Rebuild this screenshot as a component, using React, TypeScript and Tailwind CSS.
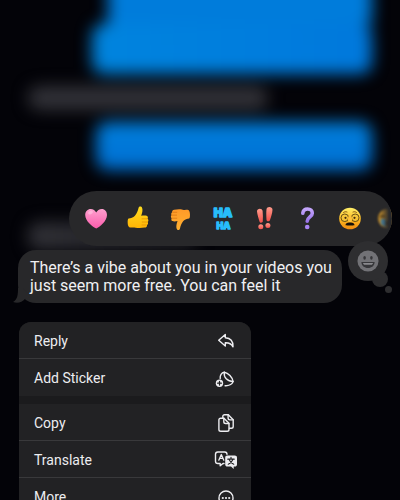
import type { ReactNode } from "react";

type Item = { label: string; icon: ReactNode };

function HeartIcon() {
  return (
    <svg viewBox="0 0 24 24" className="size-6" aria-hidden="true">
      <defs>
        <linearGradient id="heart" x1="0" y1="0" x2="0" y2="1">
          <stop offset="0" stopColor="#ff9fce" />
          <stop offset="1" stopColor="#f95cab" />
        </linearGradient>
      </defs>
      <path
        d="M12.300 22.600C9 20.600 1.200 15.400 1.200 8.900 1.200 5.500 3.700 3 6.700 3c2.500 0 4.600 1.500 5.500 3.600C13.200 4.500 15.300 3 17.800 3c3 0 5.200 2.500 5.200 5.900 0 6.500-7.500 11.700-10.700 13.700z"
        fill="url(#heart)"
      />
      <ellipse cx="6.500" cy="6.500" rx="2.600" ry="1.700" fill="#ffc4e2" opacity=".6" transform="rotate(-30 6.500 6.500)" />
    </svg>
  );
}

function ThumbShape({ from, to, line, id }: { from: string; to: string; line: string; id: string }) {
  return (
    <>
      <defs>
        <linearGradient id={id} x1="0" y1="0" x2="0" y2="1">
          <stop offset="0" stopColor={from} />
          <stop offset="1" stopColor={to} />
        </linearGradient>
      </defs>
      <path
        d="M2.600 12.600C4.800 12.200 7.200 11.800 8.900 9.800c1.900-2.100 3-5 3.700-8 .4-1.700 2.900-1.700 3.500 0 .9 2.400 0 5.300-.9 8 1.900-.3 4-.5 5.400 0 1.400.5 1.600 2 .9 2.900 1.200.9 1.200 2.500.2 3.200.7 1.100.4 2.400-.7 3 .3 1.400-.6 2.500-2.200 2.700-3.200.6-6.600.7-9.200.1-1.500-.4-3-.2-5.200-.2-1.700 0-2.600-1.900-2.700-4.300-.1-2 0-4.300.9-4.600z"
        fill={`url(#${id})`}
      />
      <path d="M16 12.800h5.200M16.200 16h5M16 19h4.200" stroke={line} strokeWidth=".7" strokeLinecap="round" fill="none" />
    </>
  );
}

function ThumbsUpIcon() {
  return (
    <svg viewBox="0 0 24 24" className="size-6" aria-hidden="true">
      <ThumbShape id="up" from="#ffdc20" to="#ffb405" line="#df8a00" />
    </svg>
  );
}

function ThumbsDownIcon() {
  return (
    <svg viewBox="0 0 24 24" className="size-6" aria-hidden="true">
      <g transform="matrix(-.92 0 0 -.96 22.500 24.500)">
        <ThumbShape id="down" from="#ffb030" to="#ff9a28" line="#d66d0c" />
      </g>
    </svg>
  );
}

function HahaIcon() {
  return (
    <svg viewBox="0 0 24 24" className="size-6 overflow-visible" aria-hidden="true">
      <g
        fill="#27bdfa"
        stroke="#27bdfa"
        strokeWidth="1.500"
        strokeLinejoin="round"
        textAnchor="middle"
        fontFamily="Inter, sans-serif"
        fontWeight="900"
      >
        <text x="12" y="11.200" fontSize="12">HA</text>
        <text x="12.500" y="22.500" fontSize="9" strokeWidth="1.300">HA</text>
      </g>
    </svg>
  );
}

function ExclaimIcon() {
  return (
    <svg viewBox="0 0 24 24" className="size-6" aria-hidden="true">
      <defs>
        <linearGradient id="bang" x1="0" y1="0" x2="0" y2="1">
          <stop offset="0" stopColor="#ff9c8c" />
          <stop offset="1" stopColor="#f4504a" />
        </linearGradient>
      </defs>
      <g fill="url(#bang)">
        <path d="M4 5.500c-.2-3.300 5.200-3.800 5.600-.4.400 3.400.4 6.900.2 10.100-.1 1.800-2.900 2-3.300.2C5.500 12 4.400 9 4 5.500z" />
        <path d="M13.500 3.300c.4-3.400 6.200-2.800 6 .5-.2 3.600-1.400 7.200-2.600 10.400-.6 1.700-3.300 1.400-3.400-.4-.2-3.500-.4-7 0-10.500z" />
        <circle cx="7.800" cy="20.700" r="2.500" />
        <circle cx="14.900" cy="19.600" r="2.500" />
      </g>
    </svg>
  );
}

function QuestionIcon() {
  return (
    <svg viewBox="0 0 24 24" className="size-6" aria-hidden="true">
      <defs>
        <linearGradient id="ask" x1="0" y1="0" x2="0" y2="1">
          <stop offset="0" stopColor="#c3a5fb" />
          <stop offset="1" stopColor="#9a74ec" />
        </linearGradient>
      </defs>
      <path
        d="M7.800 7.300c.3-2.700 2.200-4.300 4.800-4.300 2.800 0 4.700 1.700 4.700 4.200 0 3.700-5.100 3.600-5.100 8.100"
        fill="none"
        stroke="url(#ask)"
        strokeWidth="3.600"
        strokeLinecap="round"
        strokeLinejoin="round"
      />
      <circle cx="12.200" cy="21" r="2.300" fill="#a985f5" />
    </svg>
  );
}

function DisguiseIcon() {
  return (
    <svg viewBox="0 0 24 24" className="size-6" aria-hidden="true">
      <defs>
        <linearGradient id="face" x1="0" y1="0" x2="0" y2="1">
          <stop offset="0" stopColor="#fff06a" />
          <stop offset=".55" stopColor="#fdb921" />
          <stop offset="1" stopColor="#f08a10" />
        </linearGradient>
      </defs>
      <circle cx="12" cy="12.500" r="10.800" fill="url(#face)" />
      <path d="M5.500 6.500c1-.9 2.300-1 3.500-.5M15 6c1.200-.5 2.500-.4 3.500.5" fill="none" stroke="#8a5a12" strokeWidth="1" strokeLinecap="round" />
      <g fill="#f2c63c" fillOpacity=".7" stroke="#5b4412" strokeWidth=".9">
        <circle cx="6.800" cy="11.800" r="3.800" />
        <circle cx="17.200" cy="11.800" r="3.800" />
      </g>
      <circle cx="7.500" cy="11.800" r="1.100" fill="#432a0e" />
      <circle cx="16.500" cy="11.800" r="1.100" fill="#432a0e" />
      <ellipse cx="12" cy="13" rx="2" ry="3.200" fill="#ffc23a" />
      <path d="M7.500 19.300c0-2 1.900-3 4.500-2.700 2.600-.3 4.500.7 4.500 2.700-1.500.3-7.500.3-9 0z" fill="#16100b" />
    </svg>
  );
}

function TearsIcon() {
  return (
    <svg viewBox="0 0 24 24" className="size-6 overflow-visible blur-[1px]" aria-hidden="true">
      <ellipse cx="7" cy="12.500" rx="9" ry="9.500" fill="#b5842c" />
      <path d="M0 11c2-1.500 4-1.500 5 0" fill="none" stroke="#4a3618" strokeWidth="1.500" />
      <path d="M1 13h5v8l-5-3z" fill="#4f8fae" />
      <path d="M6 15h6v5H6z" fill="#5a4218" />
    </svg>
  );
}

function GrinIcon() {
  return (
    <svg viewBox="0 0 24 24" className="size-[22px]" aria-hidden="true">
      <circle cx="12" cy="12" r="11.500" fill="#727276" />
      <ellipse cx="8.300" cy="8.500" rx="1.400" ry="2" fill="#37373a" />
      <ellipse cx="15.700" cy="8.500" rx="1.400" ry="2" fill="#37373a" />
      <path d="M4.800 13h14.400c0 4-3.200 6.600-7.200 6.600S4.800 17 4.800 13z" fill="#37373a" />
      <path d="M6.500 14.300h11c-.3 1.300-1 1.900-2.200 1.900H8.700c-1.200 0-1.900-.6-2.200-1.900z" fill="#8a8a8e" />
    </svg>
  );
}

const line = {
  viewBox: "0 0 24 24",
  className: "size-6",
  fill: "none",
  stroke: "currentColor",
  strokeWidth: 1.4,
  strokeLinecap: "round",
  strokeLinejoin: "round",
  "aria-hidden": true,
} as const;

function ReplyIcon() {
  return (
    <svg {...line}>
      <path d="M11.300 5.500 4.700 11.300l6.600 5.700v-3.300c3.600-.2 5.900.9 7.700 4.100.2-5.100-2.500-8.700-7.700-9z" />
    </svg>
  );
}

function StickerIcon() {
  return (
    <svg {...line}>
      <path d="M6.200 11.500C5.800 8.500 7.500 5.600 10.300 5.200c4 .6 8.200 5.300 8.800 9.300-.9 2.700-4.300 4.500-8 4.200" />
      <path d="M10.300 5.200c-.8 5.300 3 9.300 8.800 9.300" />
      <circle cx="5.500" cy="16.200" r="3.700" fill="currentColor" stroke="none" />
      <path d="M5.500 14.300v3.800M3.600 16.200h3.800" stroke="#222224" strokeWidth="1.200" />
    </svg>
  );
}

function CopyIcon() {
  return (
    <svg {...line}>
      <path d="M8.800 6.800V5.600c0-1.100.7-1.800 1.800-1.800h3.700l4.900 4.900v6.800c0 1.100-.7 1.800-1.800 1.800h-2" />
      <path d="M14.100 3.800v3.300c0 1.100.7 1.800 1.800 1.800h3.200" />
      <path d="M6.700 7.200h3.200l5.100 5.100v6.100c0 1.100-.7 1.800-1.800 1.800H6.700c-1.100 0-1.800-.7-1.800-1.800V9c0-1.100.7-1.800 1.800-1.800z" />
      <path d="M9.800 7.300v3.400c0 1.100.7 1.800 1.800 1.800h3.300" />
    </svg>
  );
}

function TranslateIcon() {
  return (
    <svg {...line}>
      <path d="M10 15.500H9l-2.800 2.300v-2.300H3.800c-1.500 0-2.300-.8-2.300-2.300V6.300C1.500 4.800 2.300 4 3.800 4h6.900c1.500 0 2.300.8 2.300 2.300" />
      <path d="m4.800 12.200 2.500-5.700 2.500 5.700M5.700 10.300h3.200" strokeWidth="1.300" />
      <path d="M13.500 7.500h7.200c1.500 0 2.300.8 2.300 2.300v6.400c0 1.500-.8 2.300-2.300 2.300h-1v2.600L17 18.500h-3.500c-1.500 0-2.300-.8-2.300-2.300V9.800c0-1.500.8-2.300 2.300-2.300z" fill="currentColor" stroke="none" />
      <path d="M17 9.400v1.500M13.800 11.200h6.400M15 11.400c.9 2.300 2.500 4 4.700 4.800M19 11.400c-.9 2.300-2.500 4-4.700 4.800" stroke="#222224" strokeWidth="1.200" />
    </svg>
  );
}

function MoreIcon() {
  return (
    <svg {...line}>
      <circle cx="12" cy="12" r="7" />
      <g fill="currentColor" stroke="none">
        <circle cx="8.800" cy="12" r="1.100" />
        <circle cx="12" cy="12" r="1.100" />
        <circle cx="15.200" cy="12" r="1.100" />
      </g>
    </svg>
  );
}

const reactions: Item[] = [
  { label: "Heart", icon: <HeartIcon /> },
  { label: "Thumbs up", icon: <ThumbsUpIcon /> },
  { label: "Thumbs down", icon: <ThumbsDownIcon /> },
  { label: "Laugh", icon: <HahaIcon /> },
  { label: "Emphasize", icon: <ExclaimIcon /> },
  { label: "Question", icon: <QuestionIcon /> },
  { label: "Disguised face", icon: <DisguiseIcon /> },
  { label: "Tears of joy", icon: <TearsIcon /> },
];

const menuGroups: Item[][] = [
  [
    { label: "Reply", icon: <ReplyIcon /> },
    { label: "Add Sticker", icon: <StickerIcon /> },
  ],
  [
    { label: "Copy", icon: <CopyIcon /> },
    { label: "Translate", icon: <TranslateIcon /> },
    { label: "More...", icon: <MoreIcon /> },
  ],
];

// Out-of-focus conversation behind the menu
function Backdrop() {
  return (
    <div className="absolute inset-0 flex flex-col px-7 blur-[8px]" aria-hidden="true">
      <div className="-mt-5 ml-20 h-11 bg-[#007cdb]" />
      <div className="ml-16 h-[50px] rounded-xl bg-linear-to-r from-[#0084de] to-[#0078dc]" />
      <div className="mt-3 h-6 w-[240px] rounded-xl bg-[#313137]" />
      <div className="mt-3 ml-[68px] h-12 rounded-xl bg-linear-to-b from-[#007fdd] to-[#006fd2]" />
      <div className="mt-[52px] h-7 w-[170px] rounded-xl bg-linear-to-r from-[#313137] to-[#1c1c20]" />
    </div>
  );
}

function ReactionBar() {
  return (
    <div className="relative z-10 mr-2 ml-[69px]">
      <div className="relative flex h-[55px] items-center overflow-hidden rounded-full bg-[#28282a] pb-px pl-[15px]">
        <div className="flex w-80 shrink-0 justify-between">
          {reactions.map((r) => (
            <button key={r.label} type="button" aria-label={r.label} className="size-6 shrink-0">
              {r.icon}
            </button>
          ))}
        </div>
        <div className="absolute inset-y-0 right-0 w-3 bg-linear-to-l from-[#28282a] from-25% to-transparent" />
      </div>
      <div className="absolute top-[50px] right-1">
        <div className="flex size-10 items-center justify-center rounded-full bg-[#2e2e30]">
          <button type="button" aria-label="Choose emoji">
            <GrinIcon />
          </button>
        </div>
        <div className="absolute right-0 -bottom-1.5 -z-10 size-4 rounded-full bg-[#2e2e30]" />
        <div className="absolute -right-1 -bottom-3 size-[7px] rounded-full bg-[#2e2e30]" />
      </div>
    </div>
  );
}

function Bubble() {
  return (
    <div className="relative mt-1 ml-[18px] w-[324px] rounded-[18px] bg-[#28282a] pt-[9px] pr-2 pb-2 pl-3 text-[16px] leading-[18px] text-[#f0f0f2]">
      <svg viewBox="0 0 18 16" className="absolute -bottom-px left-[-5px] h-4 w-[18px]" aria-hidden="true">
        <path d="M5 0c0 7-.5 11.500-5 14 4.500 1.500 9 .5 12-3l6-2L10 0z" fill="#28282a" />
      </svg>
      <p className="relative">There’s a vibe about you in your videos you just seem more free. You can feel it</p>
    </div>
  );
}

function ContextMenu() {
  return (
    <div className="mt-[19px] ml-[19px] flex w-[232px] flex-col gap-2 overflow-hidden rounded-xl bg-[#1b1b1d]">
      {menuGroups.map((group, i) => (
        <div key={i} className="divide-y divide-[#39393b] bg-[#222224]">
          {group.map((item) => (
            <button
              key={item.label}
              type="button"
              className="flex h-[37px] w-full items-center justify-between pt-0.5 pr-[13px] pl-[15px] text-[14px] text-[#ededf0]"
            >
              {item.label}
              {item.icon}
            </button>
          ))}
        </div>
      ))}
    </div>
  );
}

export default function App() {
  return (
    <main className="relative h-screen overflow-hidden bg-[#030308] font-['Roboto',sans-serif]">
      <Backdrop />
      <div className="relative pt-[191px]">
        <ReactionBar />
        <Bubble />
        <ContextMenu />
      </div>
    </main>
  );
}
